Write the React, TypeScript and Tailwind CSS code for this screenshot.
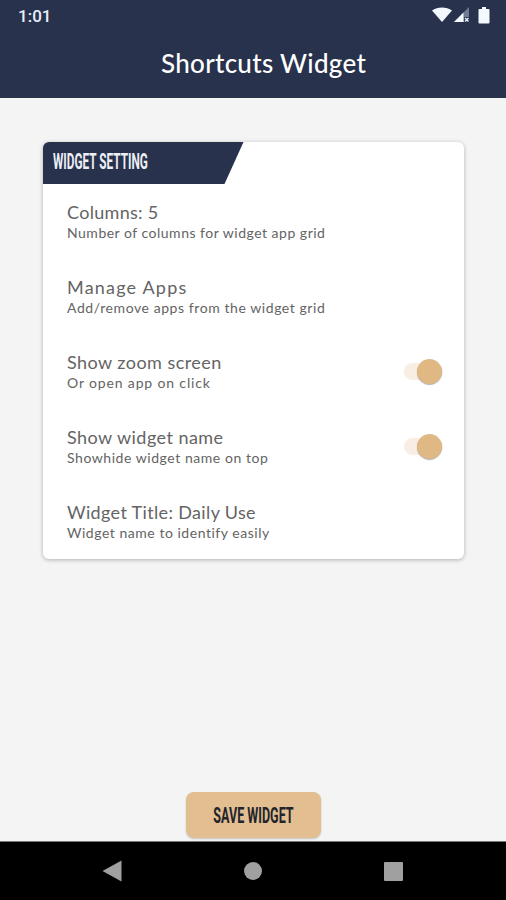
import React, { useState } from 'react';

interface Setting {
  id: string;
  title: string;
  subtitle: string;
  titleClass: string;
  subtitleClass: string;
  toggle?: boolean;
}

const SETTINGS: Setting[] = [
  {
    id: 'columns',
    title: 'Columns: 5',
    subtitle: 'Number of columns for widget app grid',
    titleClass: 'tracking-[0.3px]',
    subtitleClass: 'tracking-[0.5px]',
  },
  {
    id: 'apps',
    title: 'Manage Apps',
    subtitle: 'Add/remove apps from the widget grid',
    titleClass: 'tracking-[1.2px]',
    subtitleClass: 'tracking-[0.57px]',
  },
  {
    id: 'zoom',
    title: 'Show zoom screen',
    subtitle: 'Or open app on click',
    titleClass: 'tracking-[0.45px]',
    subtitleClass: 'tracking-[0.85px]',
    toggle: true,
  },
  {
    id: 'name',
    title: 'Show widget name',
    subtitle: 'Showhide widget name on top',
    titleClass: 'tracking-[0.45px]',
    subtitleClass: 'tracking-[0.55px]',
    toggle: true,
  },
  {
    id: 'title',
    title: 'Widget Title: Daily Use',
    subtitle: 'Widget name to identify easily',
    titleClass: 'tracking-[0.35px]',
    subtitleClass: 'tracking-[0.53px]',
  },
];

const StatusBar: React.FC = () => (
  <div className="flex h-8 items-center justify-between pl-[18px] pr-4">
    <span className="font-['Roboto',sans-serif] text-[17px] font-medium leading-8 text-[#e9eef8]">1:01</span>
    <div className="mt-[-2px] flex items-center">
      <svg width="20" height="16" viewBox="0 0 20 16" fill="#f4f8ff">
        <path d="M0 3.400C5.500-.6 14.500-.6 20 3.400L10 15Z" />
      </svg>
      <svg className="ml-[2px]" width="16" height="16" viewBox="0 0 16 16">
        <path d="M15 0v15H0Z" fill="#717b91" />
        <path d="M9.500 5.500V15H0Z" fill="#f4f8ff" />
        <path d="M10 10h5v5h-5z" fill="#28324c" />
        <path d="M11 11l3.500 3.500m0-3.500l-3.500 3.500" stroke="#e4e9f4" strokeWidth="1.500" />
      </svg>
      <svg className="ml-[8px]" width="12" height="17" viewBox="0 0 12 17" fill="#f4f8ff">
        <path d="M4 0h4v2h2.500q1 0 1 1v12.500q0 1-1 1h-9q-1 0-1-1V3q0-1 1-1H4Z" />
      </svg>
    </div>
  </div>
);

interface ToggleProps {
  checked: boolean;
  onChange: () => void;
  label: string;
}

const Toggle: React.FC<ToggleProps> = ({ checked, onChange, label }) => (
  <button
    role="switch"
    aria-checked={checked}
    aria-label={label}
    onClick={onChange}
    className={`mb-[1px] flex h-[26px] w-[39px] items-center ${checked ? 'justify-end' : 'justify-start'}`}
  >
    <span className="-mr-[26px] h-[17px] w-[39px] rounded-full bg-[#f8eee3]" />
    <span className="relative size-[25px] shrink-0 rounded-full bg-[#dfb883] shadow-[0_1px_1px_rgba(0,0,0,0.3)]" />
  </button>
);

const App: React.FC = () => {
  const [enabled, setEnabled] = useState<Record<string, boolean>>({ zoom: true, name: true });

  const toggle = (id: string) => setEnabled((prev) => ({ ...prev, [id]: !prev[id] }));

  return (
    <div className="flex h-[900px] w-[506px] flex-col overflow-hidden bg-[#f4f4f4] font-['Lato',sans-serif]">
      <header className="h-[98px] shrink-0 bg-[#28324c]">
        <StatusBar />
        <h1 className="pl-[161px] text-[26px] leading-[63px] font-medium tracking-[0.3px] whitespace-nowrap text-white">
          Shortcuts Widget
        </h1>
      </header>

      <main className="flex flex-1 flex-col items-center justify-between pt-[44px] pb-[3px]">
        <section className="w-[421px] overflow-hidden rounded-[6px] bg-white shadow-[0_1px_4px_rgba(0,0,0,0.28)]">
          <div className="h-[42px] w-[201px] bg-[#28324c] pl-[10px] [clip-path:polygon(0_0,100%_0,182px_100%,0_100%)]">
            <h2 className="origin-left scale-x-[0.55] text-[21.5px] font-bold leading-[40px] whitespace-nowrap text-[#eceff6] font-['Roboto',sans-serif]">
              WIDGET SETTING
            </h2>
          </div>

          {SETTINGS.map((item) => (
            <div key={item.id} className="flex h-[75px] items-center justify-between pr-[22px] pl-[24.5px]">
              <div className="pt-[2px] whitespace-nowrap text-[#646464]">
                <p className={`text-[18px] leading-[20px] ${item.titleClass}`}>{item.title}</p>
                <p className={`text-[14px] leading-[21px] ${item.subtitleClass}`}>{item.subtitle}</p>
              </div>
              {item.toggle && (
                <Toggle checked={enabled[item.id]} onChange={() => toggle(item.id)} label={item.title} />
              )}
            </div>
          ))}
        </section>

        <button className="flex h-[46px] w-[135px] items-center justify-center rounded-[8px] bg-[#e3be91] shadow-[0_1px_2px_rgba(0,0,0,0.2)]">
          <span className="scale-x-[0.57] text-[22px] font-bold whitespace-nowrap text-[#22242c] font-['Roboto',sans-serif]">
            SAVE WIDGET
          </span>
        </button>
      </main>

      <nav className="flex h-[59px] shrink-0 items-center justify-between border-t border-[#777777] bg-black pr-[103px] pl-[102px]">
        <svg width="20" height="22" viewBox="0 0 20 22" fill="#a0a0a0">
          <path d="M19.500 0.500v21L0.500 11Z" />
        </svg>
        <div className="size-[18px] rounded-full bg-[#a0a0a0]" />
        <div className="size-[19px] rounded-[1px] bg-[#a0a0a0]" />
      </nav>
    </div>
  );
};

export default App;
